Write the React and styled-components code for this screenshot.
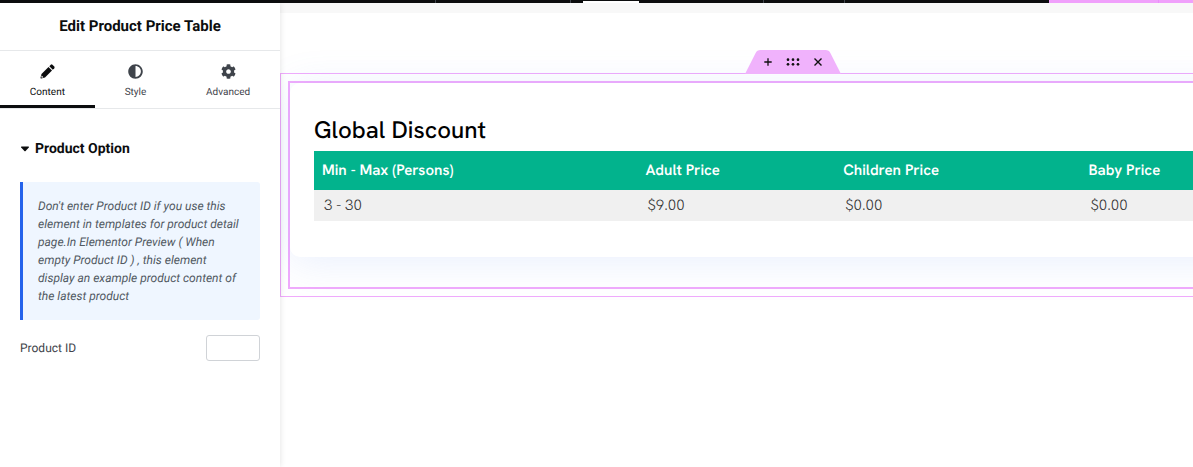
import styled, { createGlobalStyle } from "styled-components";
import { FaAdjust, FaCog } from "react-icons/fa";

function PencilIcon({ size }) {
  return (
    <svg width={size} height={size} viewBox="0 0 15 15" fill="currentColor">
      <path d="M8.500 3L12 6.500L5 13.500L1.300 14.500Q0.300 14.700 0.500 13.700L1.500 10Z" />
      <path d="M9.300 2.200L10.800 0.700Q11.600 0 12.400 0.700L14.300 2.600Q15 3.400 14.300 4.200L12.800 5.700Z" />
      <path d="M1.700 11.600L3.400 13.300L1.900 13.700L1.300 13.100Z" fill="#fff" />
    </svg>
  );
}

const tabs = [
  { name: "Content", icon: PencilIcon, active: true },
  { name: "Style", icon: FaAdjust },
  { name: "Advanced", icon: FaCog },
];

const prices = [
  { range: "3 - 30", adult: "$9.00", children: "$0.00", baby: "$0.00" },
];

function Panel() {
  return (
    <PanelContent>
      <PanelTitle>Edit Product Price Table</PanelTitle>
      <Tabs>
        {tabs.map(({ name, icon: Icon, active }) => (
          <Tab key={name} type="button" $active={active}>
            <Icon size={15} />
            {name}
          </Tab>
        ))}
      </Tabs>
      <Section>
        <SectionToggle type="button" aria-expanded="true">
          <Caret viewBox="0 0 10 6">
            <path d="M1.500 0.500H8.500Q9.500 0.800 8.800 1.600L5.600 5Q5 5.500 4.400 5L1.200 1.600Q0.500 0.800 1.500 0.500Z" />
          </Caret>
          Product Option
        </SectionToggle>
        <Notice>
          Don't enter Product ID if you use this element in templates for
          product detail page.In Elementor Preview ( When empty Product ID ) ,
          this element display an example product content of the latest product
        </Notice>
        <Field>
          <label htmlFor="product-id">Product ID</label>
          <Input id="product-id" type="text" />
        </Field>
      </Section>
    </PanelContent>
  );
}

function Handle() {
  return (
    <HandleContent>
      <HandleShape viewBox="0 0 96 23" preserveAspectRatio="none">
        <path d="M0 23 L10.500 3 Q12 0 15.500 0 H80.500 Q84 0 85.500 3 L96 23 Z" />
      </HandleShape>
      <HandleButton type="button" aria-label="Add">
        <svg width="8" height="8" viewBox="0 0 8 8">
          <path d="M4 0.300V7.700M0.300 4H7.700" stroke="#111" strokeWidth="1.300" />
        </svg>
      </HandleButton>
      <HandleButton type="button" aria-label="Edit">
        <svg width="14" height="8" viewBox="0 0 14 8">
          {[2, 7, 12].map((x) => (
            <g key={x} fill="#111">
              <circle cx={x} cy="1.700" r="1.350" />
              <circle cx={x} cy="6.300" r="1.350" />
            </g>
          ))}
        </svg>
      </HandleButton>
      <HandleButton type="button" aria-label="Delete">
        <svg width="8" height="8" viewBox="0 0 8 8">
          <path d="M0.500 0.500L7.500 7.500M7.500 0.500L0.500 7.500" stroke="#111" strokeWidth="1.400" />
        </svg>
      </HandleButton>
    </HandleContent>
  );
}

function PriceTable() {
  return (
    <Card>
      <Heading>Global Discount</Heading>
      <Table>
        <thead>
          <tr>
            <HeadCell $width="36.8%">Min - Max (Persons)</HeadCell>
            <HeadCell $width="22.5%">Adult Price</HeadCell>
            <HeadCell $width="27.9%">Children Price</HeadCell>
            <HeadCell>Baby Price</HeadCell>
          </tr>
        </thead>
        <tbody>
          {prices.map((price) => (
            <tr key={price.range}>
              <Cell>{price.range}</Cell>
              <Cell>{price.adult}</Cell>
              <Cell>{price.children}</Cell>
              <Cell>{price.baby}</Cell>
            </tr>
          ))}
        </tbody>
      </Table>
    </Card>
  );
}

function App() {
  return (
    <>
      <GlobalStyle />
      <Page>
        <TopBar>
          <BarItem $grow={436} />
          <BarItem $grow={135} />
          <BarItem $grow={193}>
            <ActivePage />
          </BarItem>
          <BarItem $grow={81} />
          <BarItem $grow={204} $last />
          <BarItem $grow={110} $pink />
          <BarItem $grow={34} $pink $last />
        </TopBar>
        <Main>
          <Panel />
          <Canvas>
            <Strip />
            <Container>
              <Handle />
              <Widget>
                <PriceTable />
              </Widget>
            </Container>
          </Canvas>
        </Main>
      </Page>
    </>
  );
}

export default App;

const GlobalStyle = createGlobalStyle`
  * {
    box-sizing: border-box;
  }

  body {
    margin: 0;
    background-color: #fff;
    font-family: Roboto, "Liberation Sans", sans-serif;
    text-rendering: geometricPrecision;
  }

  button {
    border: 0;
    padding: 0;
    background: none;
    font-family: inherit;
    text-rendering: inherit;
    cursor: pointer;
  }
`;

const Page = styled.div`
  display: flex;
  flex-direction: column;
  min-height: 100vh;
`;

const TopBar = styled.header`
  display: flex;
  height: 3px;
  background-color: #0c0d0e;
`;

const BarItem = styled.div`
  flex: ${({ $grow }) => $grow} 0 0;
  background-color: ${({ $pink }) => ($pink ? "#f0a0fb" : "#0c0d0e")};
  box-shadow: ${({ $last, $pink }) =>
    $last ? "none" : `inset -1px 0 ${$pink ? "#eb8efb" : "#3f444b"}`};
`;

const ActivePage = styled.div`
  width: 56px;
  height: 2px;
  margin: 1px 0 0 12px;
  background-color: #fff;
`;

const Main = styled.div`
  display: flex;
  flex: 1;
`;

const PanelContent = styled.aside`
  position: relative;
  z-index: 1;
  flex: 0 0 280px;
  background-color: #fff;
  box-shadow: 0 0 6px rgba(0, 0, 0, 0.12);
  clip-path: inset(0 -10px 0 0);
`;

const PanelTitle = styled.h1`
  margin: 0;
  padding: 13px 0;
  font-size: 15px;
  font-weight: 700;
  line-height: 21px;
  text-align: center;
  color: #0c0d0e;
`;

const Tabs = styled.nav`
  display: flex;
  height: 59px;
  border-top: 1px solid #e6e8ea;
  border-bottom: 1px solid #e6e8ea;
`;

const Tab = styled.button`
  display: flex;
  flex-direction: column;
  align-items: center;
  gap: 7px;
  flex: 1 1 auto;
  padding-top: 13px;
  font-size: 10px;
  line-height: 14px;
  font-weight: 400;
  color: ${({ $active }) => ($active ? "#0c0d0e" : "#3f444b")};
  border-bottom: 3px solid
    ${({ $active }) => ($active ? "#0c0d0e" : "transparent")};
`;

const Section = styled.section`
  padding: 30px 20px;
`;

const SectionToggle = styled.button`
  display: flex;
  align-items: center;
  gap: 5px;
  font-size: 14px;
  font-weight: 700;
  line-height: 20px;
  color: #0c0d0e;
`;

const Caret = styled.svg`
  width: 10px;
  height: 6px;
  fill: currentColor;
`;

const Notice = styled.p`
  margin: 23px 0 15px;
  padding: 15px;
  font-size: 12px;
  font-style: italic;
  font-weight: 400;
  line-height: 18px;
  color: #515962;
  background-color: #eff6ff;
  border-left: 3px solid #2563eb;
  border-radius: 0 3px 3px 0;
`;

const Field = styled.div`
  display: flex;
  align-items: center;
  justify-content: space-between;
  font-size: 12px;
  color: #3f444b;
`;

const Input = styled.input`
  width: 54px;
  height: 26px;
  padding: 4px 8px;
  font-size: 12px;
  border: 1px solid #d0d3d7;
  border-radius: 3px;
`;

const Canvas = styled.main`
  flex: 1;
  min-width: 0;
  overflow: hidden;
`;

const Strip = styled.div`
  height: 10px;
  margin-bottom: 60px;
  background-color: #f8f8f8;
`;

const Container = styled.div`
  position: relative;
  padding: 7px 0 7px 7px;
  border: 1px solid #f0abfc;
  border-right: 0;
`;

const Widget = styled.div`
  padding-bottom: 30px;
  border: 2px solid #f0abfc;
  border-right: 0;
`;

const Card = styled.div`
  margin-right: -60px;
  padding: 33px 60px 36px 24px;
  background-color: #fff;
  border-radius: 10px;
  box-shadow: 0 5px 40px rgba(110, 150, 240, 0.15);
`;

const Heading = styled.h2`
  margin: 0 0 5px;
  font-family: "Hanken Grotesk", Inter, sans-serif;
  font-size: 24px;
  font-weight: 500;
  line-height: 30px;
  color: #000;
`;

const Table = styled.table`
  width: 100%;
  table-layout: fixed;
  border-collapse: collapse;
  font-family: "Hanken Grotesk", Inter, sans-serif;
  font-size: 15px;
  line-height: 20px;
  text-align: left;
  white-space: nowrap;
`;

const HeadCell = styled.th`
  width: ${({ $width }) => $width || "auto"};
  padding: 9px 8px 10px;
  font-weight: 600;
  color: #fff;
  background-color: #02b38d;
`;

const Cell = styled.td`
  padding: 5px 10px 6px;
  font-weight: 300;
  color: #333;
  background-color: #f0f0f0;
`;

const HandleContent = styled.div`
  position: absolute;
  top: -24px;
  left: 50.9%;
  display: flex;
  align-items: center;
  justify-content: center;
  gap: 14px;
  width: 96px;
  height: 24px;
`;

const HandleShape = styled.svg`
  position: absolute;
  inset: 0;
  width: 100%;
  height: 100%;
  fill: #f0b2fc;
`;

const HandleButton = styled.button`
  position: relative;
  display: flex;
`;
